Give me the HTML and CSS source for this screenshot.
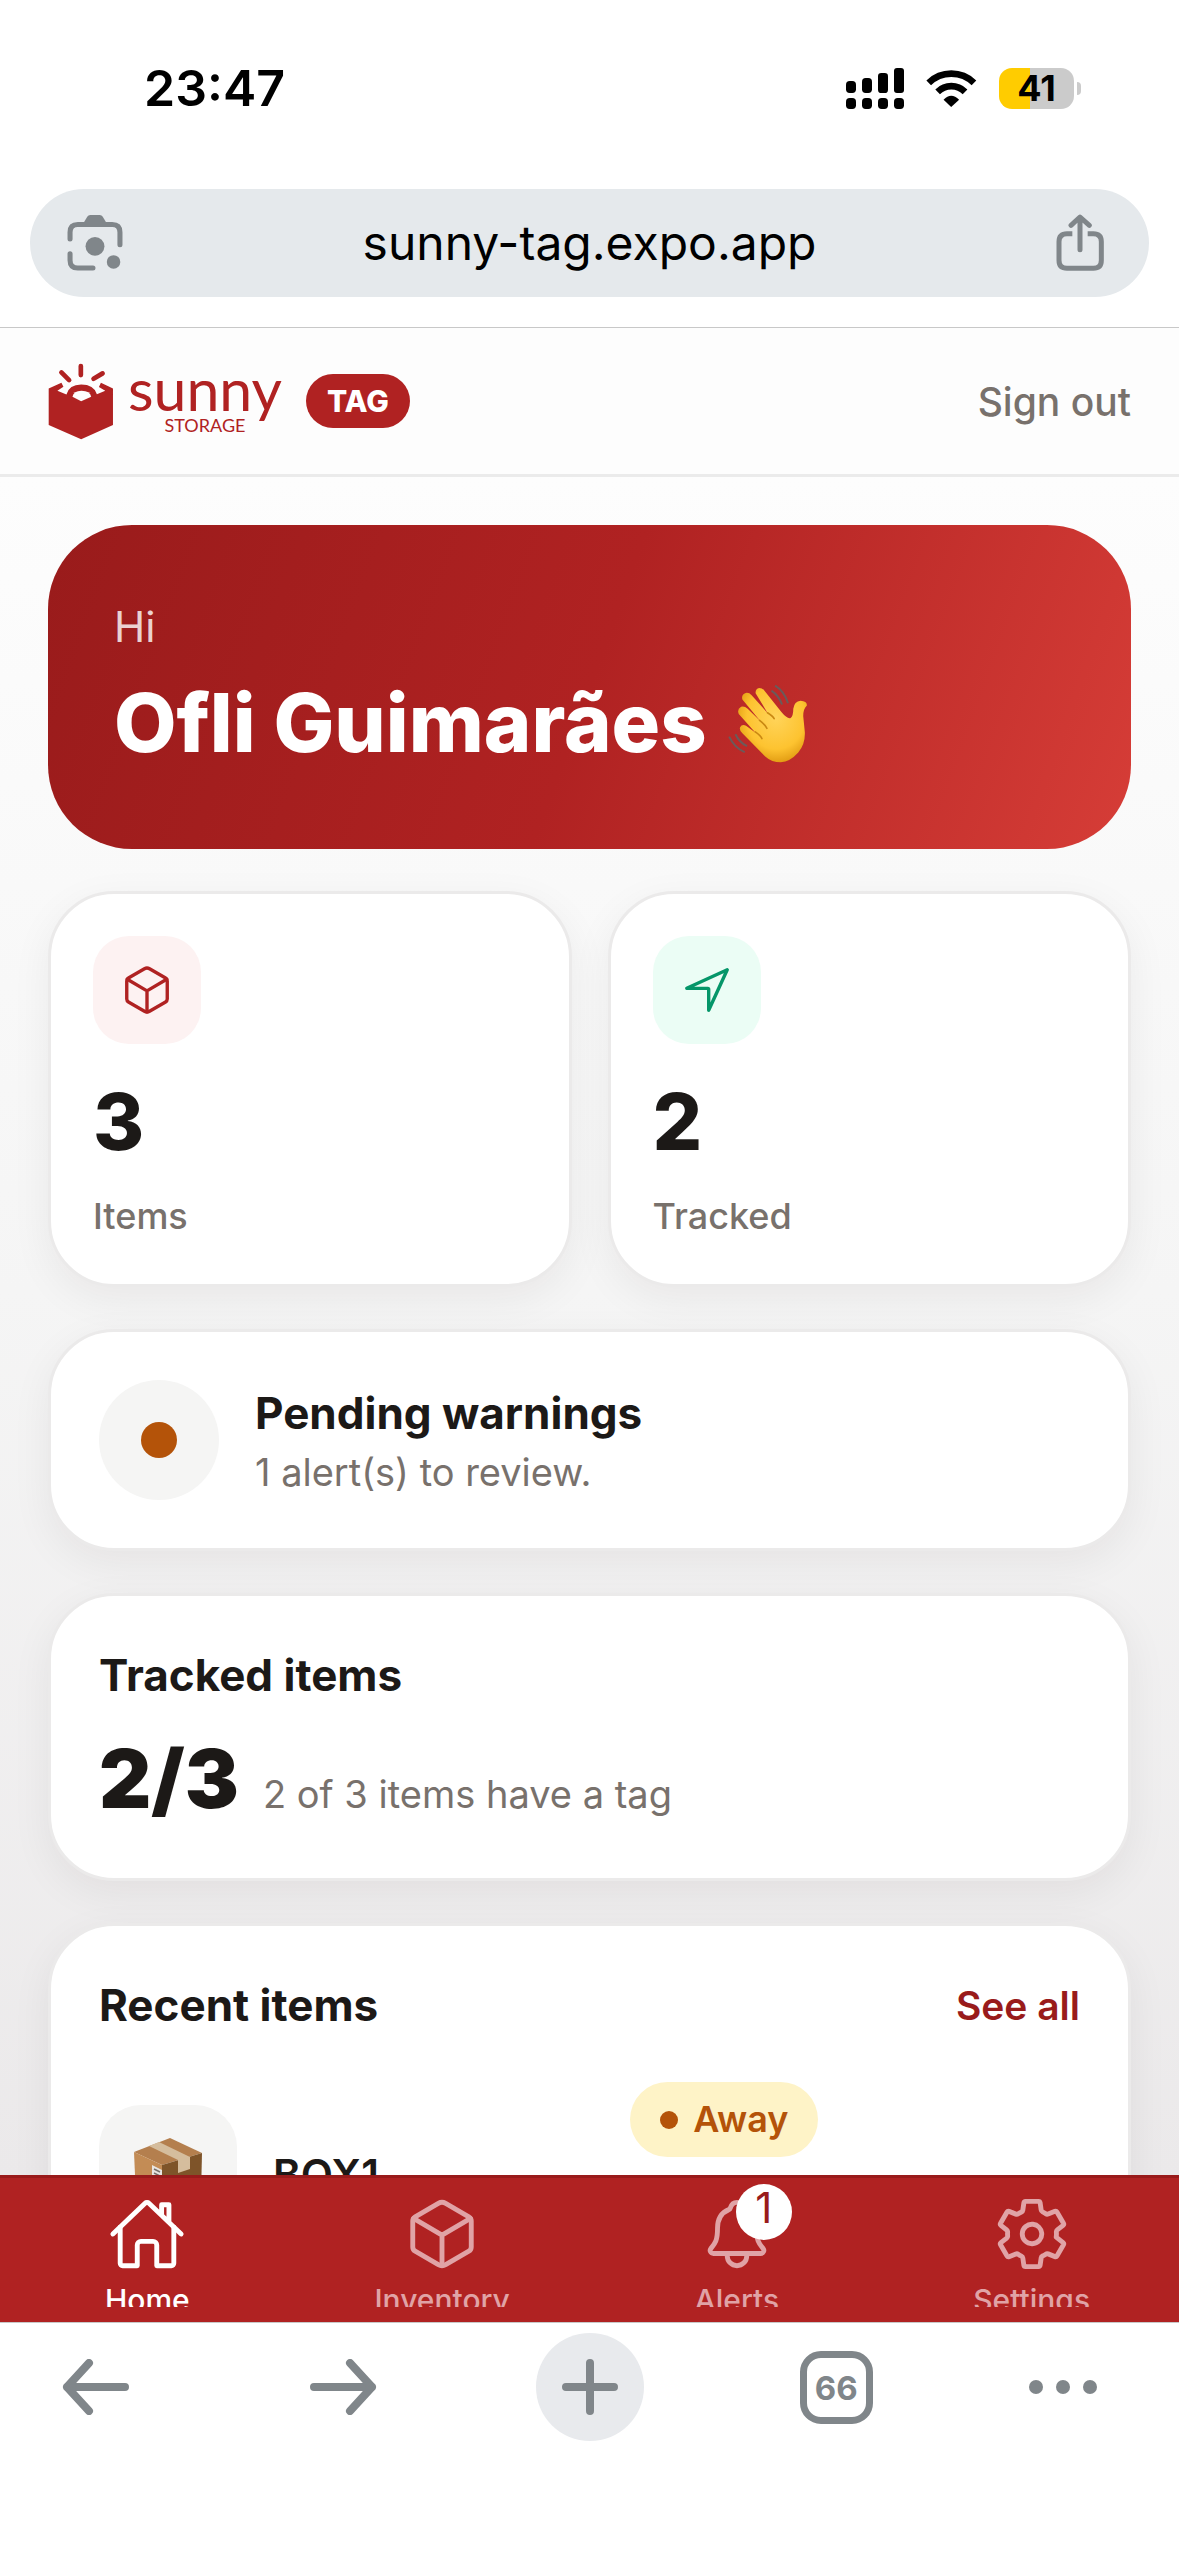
FILE: index.html
```html
<!DOCTYPE html>
<html lang="en">
<head>
    <meta charset="UTF-8">
    <meta name="viewport" content="width=device-width, initial-scale=1.0">
    <title>Sunny Tag</title>
    <link rel="stylesheet" href="styles.css">
</head>
<body>

    <!-- Status bar -->
    <div class="status-bar">
        <span class="time">23:47</span>
        <div class="status-icons">
            <svg class="signal" viewBox="48 51 174 123" aria-hidden="true">
                <rect x="48" y="90" width="30" height="36" rx="11"/>
                <rect x="96" y="81" width="30" height="45" rx="11"/>
                <rect x="144" y="66" width="30" height="60" rx="10"/>
                <rect x="192" y="51" width="30" height="75" rx="9"/>
                <rect x="48" y="141" width="30" height="33" rx="11"/>
                <rect x="96" y="141" width="30" height="33" rx="11"/>
                <rect x="144" y="141" width="30" height="33" rx="11"/>
                <rect x="192" y="141" width="30" height="33" rx="11"/>
            </svg>
            <svg class="wifi" viewBox="289 56 152 112" aria-hidden="true">
                <path d="M296 95 A98 98 0 0 1 433 95" class="wave"/>
                <path d="M323 122 A59 59 0 0 1 406 122" class="wave"/>
                <path d="M364 168 L341 146 Q364 122 388 146 Z"/>
            </svg>
            <div class="battery">
                <span class="battery-level">41</span>
                <span class="battery-tip"></span>
            </div>
        </div>
    </div>

    <!-- Address bar -->
    <div class="address-bar">
        <div class="omnibox">
            <button class="omnibox-button" aria-label="Search with camera">
                <svg class="lens-icon" viewBox="80 42 172 172">
                    <path d="M92 116 V96 Q92 73 115 73 H217 Q240 73 240 96 V133 M92 160 V179 Q92 202 115 202 H160" class="line"/>
                    <path d="M131 70 L143 50 Q146 45 152 45 H180 Q186 45 189 50 L201 70 Z"/>
                    <circle cx="166" cy="138" r="28"/>
                    <circle cx="221" cy="184" r="20"/>
                </svg>
            </button>
            <input class="url" type="text" value="sunny-tag.expo.app" aria-label="Address">
            <button class="omnibox-button" aria-label="Share">
                <svg class="share-icon" viewBox="672 494 148 174">
                    <path d="M723 553 H707 Q683 553 683 577 V633 Q683 657 707 657 H786 Q810 657 810 633 V577 Q810 553 786 553 H769" class="edge"/>
                    <path d="M746 601 V506 M719 528 L746 503 L774 528" class="line"/>
                </svg>
            </button>
        </div>
    </div>

    <!-- App header -->
    <header class="app-header">
        <div class="brand">
            <svg class="brand-mark" viewBox="56 36 195 230" aria-hidden="true">
                <path d="M57 112 L95 95 L101 107 L83 119 L110 130 Q118 100 154 100 Q192 100 201 129 L226 119 L207 108 L213 95 L249 112 V221 L154 264 L57 221 Z"/>
                <path d="M128 137 Q131 119 155 119 Q181 119 184 137 L154 150 Z" class="hole"/>
                <path d="M153 45 V72 M95 64 L118 87 M218 67 L191 83" class="ray"/>
            </svg>
            <div class="wordmark">
                <span class="wordmark-name">sunny</span>
                <span class="wordmark-sub">STORAGE</span>
            </div>
            <span class="brand-tag">TAG</span>
        </div>
        <button class="sign-out">Sign out</button>
    </header>

    <main class="content">
        <section class="hero">
            <p class="hero-hi">Hi</p>
            <h1 class="hero-name">Ofli Guimarães
                <svg class="wave-hand" viewBox="40 30 250 245" role="img" aria-label="waving hand">
                    <defs>
                        <radialGradient id="skin" cx="55%" cy="40%" r="65%">
                            <stop offset="0" stop-color="#ffd45a"/>
                            <stop offset="0.65" stop-color="#fdc330"/>
                            <stop offset="1" stop-color="#dc940c"/>
                        </radialGradient>
                    </defs>
                    <path d="M79 164 Q84 154 97 159 L125 180 L75 124 Q69 109 82 102 Q92 99 102 108 L140 145 L86 80 Q82 64 96 60 Q106 58 114 67 L163 122 L126 61 Q125 47 137 45 Q147 45 154 55 L204 118 Q222 140 232 136 Q240 130 240 108 Q243 86 262 84 Q282 85 281 98 Q270 108 270 130 L275 180 Q276 215 255 240 Q230 268 202 270 Q175 270 155 252 L86 182 Q76 173 79 164 Z" fill="url(#skin)"/>
                    <path d="M125 178 Q142 190 145 198 M138 143 Q156 157 160 167 M162 120 Q178 130 182 138" class="crease"/>
                    <path d="M46 192 Q62 226 93 239 M65 185 Q76 209 100 221 M185 38 Q213 55 224 91 M174 53 Q196 68 206 95" class="motion"/>
                </svg>
            </h1>
        </section>

        <section class="stats">
            <div class="card stat">
                <span class="stat-icon stat-icon-red">
                    <svg class="icon" viewBox="0 0 512 512" aria-hidden="true">
                        <path d="M448 341.37V170.61A32 32 0 00432.11 143l-152-88.46a47.94 47.94 0 00-48.24 0L79.89 143A32 32 0 0064 170.61v170.76A32 32 0 0079.89 369l152 88.46a48 48 0 0048.24 0l152-88.46A32 32 0 00448 341.37z"/>
                        <path d="M69 153.99l187 110 187-110M256 463.99v-200"/>
                    </svg>
                </span>
                <span class="big-number">3</span>
                <span class="stat-label">Items</span>
            </div>
            <div class="card stat">
                <span class="stat-icon stat-icon-green">
                    <svg class="icon" viewBox="0 0 512 512" aria-hidden="true">
                        <path d="M448 64L64 240.14h200a8 8 0 018 8V448z"/>
                    </svg>
                </span>
                <span class="big-number">2</span>
                <span class="stat-label">Tracked</span>
            </div>
        </section>

        <section class="card warning">
            <span class="warning-icon"><span class="warning-dot"></span></span>
            <div class="warning-text">
                <h2 class="card-title">Pending warnings</h2>
                <p class="muted">1 alert(s) to review.</p>
            </div>
        </section>

        <section class="card tracked">
            <h2 class="card-title">Tracked items</h2>
            <div class="tracked-row">
                <span class="big-number">2/3</span>
                <span class="muted">2 of 3 items have a tag</span>
            </div>
        </section>

        <section class="card recent">
            <div class="recent-head">
                <h2 class="card-title">Recent items</h2>
                <a class="see-all" href="#">See all</a>
            </div>
            <div class="item">
                <span class="item-thumb">
                    <svg class="box-icon" viewBox="0 0 68 72" aria-hidden="true">
                        <path d="M0 14 L36 0 L68 15 L28 27 Z" fill="#b47f4e"/>
                        <path d="M0 14 L28 27 V72 L2 60 Z" fill="#c38c55"/>
                        <path d="M28 27 L68 15 L67 57 L28 72 Z" fill="#7e5429"/>
                        <path d="M15 8 L25 4 L56 19 V31 L44 35 V22 Z" fill="#d5bd9d"/>
                        <path d="M18 27 L28 32 V46 L18 42 Z" fill="#e8e6e2"/>
                        <path d="M20 31 L26 34 M20 35 L26 38 M20 39 L24 41" stroke="#77706a" stroke-width="1.5"/>
                    </svg>
                </span>
                <span class="item-name">BOX1</span>
                <div class="item-meta">
                    <span class="chip"><span class="chip-dot"></span>Away</span>
                </div>
            </div>
        </section>
    </main>

    <!-- App tabs -->
    <nav class="tab-bar">
        <a class="tab tab-active" href="#">
            <span class="tab-icon">
                <svg class="icon" viewBox="0 0 512 512" aria-hidden="true">
                    <path d="M80 212v236a16 16 0 0016 16h96V328a24 24 0 0124-24h80a24 24 0 0124 24v136h96a16 16 0 0016-16V212"/>
                    <path d="M480 256L266.89 52c-5-5.28-16.69-5.34-21.78 0L32 256M400 179V64h-48v69"/>
                </svg>
            </span>
            <span class="tab-label">Home</span>
        </a>
        <a class="tab" href="#">
            <span class="tab-icon">
                <svg class="icon" viewBox="0 0 512 512" aria-hidden="true">
                    <path d="M448 341.37V170.61A32 32 0 00432.11 143l-152-88.46a47.94 47.94 0 00-48.24 0L79.89 143A32 32 0 0064 170.61v170.76A32 32 0 0079.89 369l152 88.46a48 48 0 0048.24 0l152-88.46A32 32 0 00448 341.37z"/>
                    <path d="M69 153.99l187 110 187-110M256 463.99v-200"/>
                </svg>
            </span>
            <span class="tab-label">Inventory</span>
        </a>
        <a class="tab" href="#">
            <span class="tab-icon">
                <svg class="icon" viewBox="0 0 512 512" aria-hidden="true">
                    <path d="M427.68 351.43C402 320 383.87 304 383.87 217.35 383.87 138 343.35 109.73 310 96c-4.43-1.82-8.6-6-9.95-10.55C294.2 65.54 277.8 48 256 48s-38.21 17.55-44 37.47c-1.35 4.6-5.52 8.71-9.95 10.53-33.39 13.75-73.87 41.92-73.87 121.35C128.13 304 110 320 84.32 351.43 73.68 364.45 83 384 101.61 384h308.88c18.51 0 27.77-19.61 17.19-32.57zM320 384v16a64 64 0 01-128 0v-16"/>
                </svg>
                <span class="badge">1</span>
            </span>
            <span class="tab-label">Alerts</span>
        </a>
        <a class="tab" href="#">
            <span class="tab-icon">
                <svg class="icon" viewBox="0 0 512 512" aria-hidden="true">
                    <path d="M262.29 192.31a64 64 0 1057.4 57.4 64.13 64.13 0 00-57.4-57.4zM416.39 256a154.34 154.34 0 01-1.53 20.79l45.21 35.46a10.81 10.81 0 012.45 13.75l-42.77 74a10.81 10.81 0 01-13.14 4.59l-44.9-18.08a16.11 16.11 0 00-15.17 1.75A164.48 164.48 0 01325 400.8a15.94 15.94 0 00-8.82 12.14l-6.73 47.89a11.08 11.08 0 01-10.68 9.17h-85.54a11.11 11.11 0 01-10.69-8.87l-6.72-47.82a16.07 16.07 0 00-9-12.22 155.3 155.3 0 01-21.46-12.57 16 16 0 00-15.11-1.71l-44.89 18.07a10.81 10.81 0 01-13.14-4.58l-42.77-74a10.8 10.8 0 012.45-13.75l38.21-30a16.05 16.05 0 006-14.08c-.36-4.17-.58-8.33-.58-12.5s.21-8.27.58-12.35a16 16 0 00-6.07-13.94l-38.19-30A10.81 10.81 0 0149.48 186l42.77-74a10.81 10.81 0 0113.14-4.59l44.9 18.08a16.11 16.11 0 0015.17-1.75A164.48 164.48 0 01187 111.2a15.94 15.94 0 008.82-12.14l6.73-47.89A11.08 11.08 0 01213.23 42h85.54a11.11 11.11 0 0110.69 8.87l6.72 47.82a16.07 16.07 0 009 12.22 155.3 155.3 0 0121.46 12.57 16 16 0 0015.11 1.71l44.89-18.07a10.81 10.81 0 0113.14 4.58l42.77 74a10.8 10.8 0 01-2.45 13.75l-38.21 30a16.05 16.05 0 00-6.05 14.08c.33 4.14.55 8.3.55 12.47z"/>
                </svg>
            </span>
            <span class="tab-label">Settings</span>
        </a>
    </nav>

    <!-- Browser toolbar -->
    <div class="toolbar">
        <button class="tool" aria-label="Back">
            <svg class="tool-icon" viewBox="0 0 68 56"><path d="M63 28 H5 M27 4 L5 28 L27 52"/></svg>
        </button>
        <button class="tool" aria-label="Forward">
            <svg class="tool-icon" viewBox="0 0 68 56"><path d="M5 28 H63 M41 4 L63 28 L41 52"/></svg>
        </button>
        <button class="tool tool-new" aria-label="New tab">
            <svg class="tool-icon" viewBox="0 0 68 56"><path d="M10 28 H58 M34 4 V52"/></svg>
        </button>
        <button class="tool" aria-label="Show tabs"><span class="tab-count">66</span></button>
        <button class="tool tool-more" aria-label="More">
            <svg class="more-icon" viewBox="0 0 68 14">
                <circle cx="7" cy="7" r="7"/>
                <circle cx="34" cy="7" r="7"/>
                <circle cx="61" cy="7" r="7"/>
            </svg>
        </button>
    </div>

</body>
</html>
```
FILE: styles.css
```css
* {
    box-sizing: border-box;
}
body {
    margin: 0;
    height: 100vh;
    display: flex;
    flex-direction: column;
    overflow: hidden;
    font-family: Inter, "Liberation Sans", sans-serif;
    color: #1c1917;
    background-color: white;
}
h1, h2, p {
    margin: 0;
}
button {
    padding: 0;
    border: none;
    background: none;
    font-family: inherit;
    cursor: pointer;
}
a {
    text-decoration: none;
}
svg {
    display: block;
    flex-shrink: 0;
}
.icon {
    width: 100%;
    height: 100%;
    fill: none;
    stroke: currentColor;
    stroke-width: 32;
    stroke-linecap: round;
    stroke-linejoin: round;
}

/* status bar */
.status-bar {
    display: flex;
    justify-content: space-between;
    align-items: center;
    height: 176px;
    padding: 0 98px 0 144px;
    color: black;
    flex-shrink: 0;
}
.time {
    font-size: 50px;
    font-weight: 600;
}
.status-icons {
    display: flex;
    align-items: center;
    gap: 22px;
}
.signal {
    width: 58px;
    height: 41px;
}
.wifi {
    width: 51px;
    height: 37px;
}
.wifi .wave {
    fill: none;
    stroke: black;
    stroke-width: 20;
}
.battery {
    display: flex;
    align-items: center;
    gap: 3px;
}
.battery-level {
    width: 75px;
    height: 41px;
    border-radius: 13px;
    background: linear-gradient(to right, #ffcc00 41%, #cbcbcb 41%);
    font-size: 36px;
    font-weight: 700;
    line-height: 41px;
    text-align: center;
}
.battery-tip {
    width: 4px;
    height: 13px;
    border-radius: 0 8px 8px 0;
    background-color: #cbcbcb;
}

/* address bar */
.address-bar {
    padding: 13px 30px 30px;
    border-bottom: 1px solid #c8c8c8;
    flex-shrink: 0;
}
.omnibox {
    display: flex;
    align-items: center;
    height: 108px;
    padding: 0 44px 0 36px;
    border-radius: 54px;
    background-color: #e5e9ec;
}
.omnibox-button svg {
    fill: #80868a;
}
.omnibox-button .line, .omnibox-button .edge {
    fill: none;
    stroke: #80868a;
    stroke-width: 15;
    stroke-linecap: round;
    stroke-linejoin: round;
}
.omnibox-button .edge {
    stroke-linecap: butt;
}
.lens-icon {
    width: 58px;
    height: 58px;
}
.share-icon {
    width: 50px;
    height: 58px;
}
.url {
    flex: 1;
    min-width: 0;
    padding: 0 0 2px;
    border: none;
    outline: none;
    background: none;
    font-family: inherit;
    font-size: 48px;
    color: black;
    text-align: center;
}

/* app header */
.app-header {
    display: flex;
    justify-content: space-between;
    align-items: center;
    height: 149px;
    padding: 0 48px;
    border-bottom: 3px solid #ebebeb;
    background-color: #fdfdfd;
    flex-shrink: 0;
}
.brand {
    display: flex;
    align-items: center;
}
.brand-mark {
    width: 66px;
    height: 77px;
    fill: #b02222;
}
.brand-mark .hole {
    fill: #fdfdfd;
}
.brand-mark .ray {
    stroke: #b02222;
    stroke-width: 14;
    stroke-linecap: round;
}
.wordmark {
    display: flex;
    flex-direction: column;
    align-items: center;
    margin: 0 24px 0 14px;
    font-family: Lato, sans-serif;
    color: #b02222;
}
.wordmark-name {
    font-size: 59px;
    line-height: 48px;
}
.wordmark-sub {
    font-size: 18px;
    line-height: 24px;
}
.brand-tag {
    padding: 0 21px;
    border-radius: 27px;
    background-color: #b02222;
    color: white;
    font-size: 30px;
    font-weight: 800;
    line-height: 54px;
}
.sign-out {
    font-size: 39px;
    font-weight: 500;
    color: #78716c;
}

/* content */
.content {
    display: flex;
    flex-direction: column;
    gap: 42px;
    flex: 1;
    min-height: 0;
    padding: 48px 48px 0;
    overflow: hidden;
    background: linear-gradient(#fdfdfd, #f5f5f5 48%, #ebe9ea);
}
.content > * {
    flex-shrink: 0;
}
.hero {
    padding: 66px;
    border-radius: 84px;
    background: linear-gradient(110deg, #991b1b, #b02222 50%, #d63d37);
    color: white;
}
.hero-hi {
    font-size: 42px;
    line-height: 72px;
    opacity: 0.8;
}
.hero-name {
    display: flex;
    align-items: center;
    gap: 20px;
    font-size: 81px;
    font-weight: 800;
    line-height: 120px;
}
.wave-hand {
    width: 83px;
    height: 81px;
}
.wave-hand .crease {
    fill: none;
    stroke: #c98812;
    stroke-width: 5;
    stroke-linecap: round;
}
.wave-hand .motion {
    fill: none;
    stroke: #6b5a5a;
    stroke-width: 6;
}
.card {
    border: 3px solid #ebeaea;
    border-radius: 66px;
    background-color: white;
    box-shadow: 0 12px 42px rgba(28, 25, 23, 0.06);
}
.card-title {
    font-size: 44px;
    font-weight: 700;
    line-height: 63px;
}
.muted {
    font-size: 38px;
    line-height: 54px;
    color: #78716c;
}
.big-number {
    font-size: 78px;
    font-weight: 800;
    line-height: 102px;
}

/* stats */
.stats {
    display: flex;
    gap: 36px;
}
.stat {
    display: flex;
    flex-direction: column;
    flex: 1;
    padding: 42px;
}
.stat-icon {
    width: 108px;
    height: 108px;
    padding: 27px;
    margin-bottom: 27px;
    border-radius: 36px;
}
.stat-icon-red {
    background-color: #fdf2f2;
    color: #b02222;
}
.stat-icon-green {
    background-color: #ebfdf5;
    color: #059669;
}
.stat-label {
    margin-top: 18px;
    font-size: 36px;
    font-weight: 500;
    line-height: 51px;
    color: #78716c;
}

/* warnings */
.warning {
    display: flex;
    align-items: center;
    gap: 36px;
    padding: 48px;
}
.warning-icon {
    display: flex;
    align-items: center;
    justify-content: center;
    width: 120px;
    height: 120px;
    border-radius: 50%;
    background-color: #f5f5f4;
}
.warning-dot {
    width: 36px;
    height: 36px;
    border-radius: 50%;
    background-color: #b45309;
}
.tracked {
    padding: 48px;
}
.tracked-row {
    display: flex;
    align-items: baseline;
    gap: 24px;
    margin-top: 21px;
}
.tracked-row .big-number {
    font-size: 81px;
    font-weight: 900;
}

/* recent items */
.recent {
    padding: 48px;
}
.recent-head {
    display: flex;
    justify-content: space-between;
    align-items: center;
    margin-bottom: 45px;
}
.see-all {
    font-size: 39px;
    font-weight: 600;
    color: #991b1b;
}
.item {
    display: flex;
    align-items: center;
    gap: 36px;
    height: 184px;
}
.item-thumb {
    display: flex;
    align-items: center;
    justify-content: center;
    width: 138px;
    height: 138px;
    border-radius: 42px;
    background-color: #f5f5f4;
}
.box-icon {
    width: 68px;
    height: 72px;
}
.item-name {
    flex: 5;
    font-size: 42px;
    font-weight: 600;
}
.item-meta {
    flex: 7;
    align-self: flex-start;
    display: flex;
}
.chip {
    display: flex;
    align-items: center;
    gap: 15px;
    padding: 0 30px;
    border-radius: 38px;
    background-color: #fef3c7;
    color: #b45309;
    font-size: 36px;
    font-weight: 600;
    line-height: 75px;
}
.chip-dot {
    width: 18px;
    height: 18px;
    border-radius: 50%;
    background-color: #b45309;
}

/* app tabs */
.tab-bar {
    display: flex;
    padding: 17px 0 15px;
    border-top: 3px solid #991b1b;
    border-bottom: 1px solid #c8c8c8;
    background-color: #b02222;
    flex-shrink: 0;
}
.tab {
    display: flex;
    flex-direction: column;
    align-items: center;
    gap: 9px;
    flex: 1;
    color: #e0a3a6;
}
.tab-active {
    color: white;
}
.tab-icon {
    position: relative;
    width: 78px;
    height: 78px;
}
.tab-label {
    height: 25px;
    overflow: hidden;
    font-size: 30px;
    font-weight: 500;
    line-height: 36px;
}
.badge {
    position: absolute;
    top: -11px;
    right: -16px;
    width: 56px;
    height: 56px;
    border-radius: 50%;
    background-color: white;
    color: #991b1b;
    font-size: 42px;
    line-height: 48px;
    text-align: center;
}

/* browser toolbar */
.toolbar {
    display: flex;
    justify-content: space-between;
    padding: 10px 42px 115px;
    flex-shrink: 0;
}
.tool {
    display: flex;
    align-items: center;
    justify-content: center;
    width: 108px;
    height: 108px;
    border-radius: 50%;
}
.tool-new {
    background-color: #e8eaed;
}
.tool-more {
    justify-content: flex-start;
}
.tool-icon {
    width: 68px;
    height: 56px;
    fill: none;
    stroke: #80868a;
    stroke-width: 8;
    stroke-linecap: round;
    stroke-linejoin: round;
}
.more-icon {
    width: 68px;
    height: 14px;
    fill: #80868a;
}
.tab-count {
    width: 73px;
    height: 73px;
    border: 7px solid #80868a;
    border-radius: 21px;
    color: #80868a;
    font-size: 33px;
    font-weight: 700;
    line-height: 60px;
    text-align: center;
}
```
